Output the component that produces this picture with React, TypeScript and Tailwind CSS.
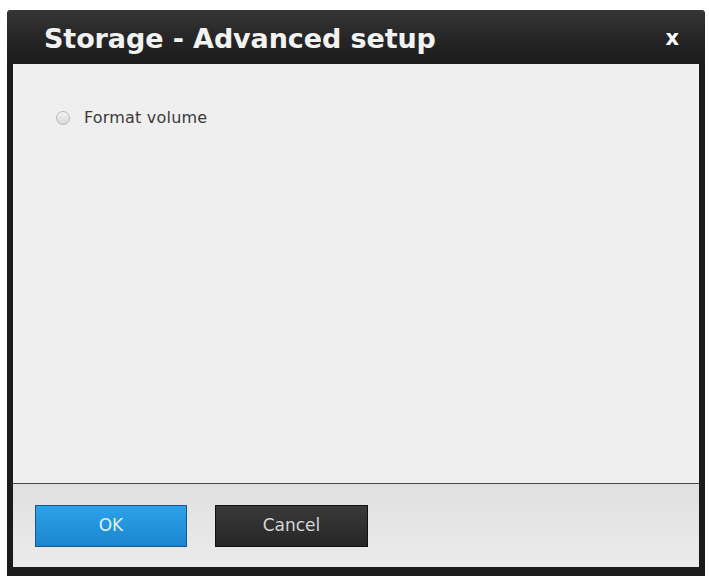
export default function App() {
  return (
    <div className="min-h-screen bg-white pt-[10px] pl-[7px]">
      {/* Dialog frame */}
      <div className="w-[698px] h-[566px] bg-[#1b1b1b] rounded-t-[4px] flex flex-col px-[6px] pb-[9px]">
        {/* Title bar */}
        <div className="h-[54px] -mx-[6px] pl-[37px] pr-[26px] pt-[5px] flex items-center justify-between rounded-t-[4px] bg-gradient-to-b from-[#363636] via-[#262626] to-[#1c1c1c]">
          <span className="text-[27px] font-bold text-[#f2f2f2] font-['DejaVu_Sans',sans-serif] tracking-[-0.1px]">
            Storage - Advanced setup
          </span>
          <button className="text-[21px] font-bold leading-none text-white font-['DejaVu_Sans',sans-serif] pb-[2px]">
            x
          </button>
        </div>

        {/* Body */}
        <div className="flex-1 bg-[#efefef] pl-[43px] pt-[42px]">
          <label className="flex items-center gap-[14px] text-[16px] tracking-[0.2px] text-[#3a3a3a] font-['DejaVu_Sans',sans-serif]">
            <span className="w-[14px] h-[14px] rounded-full border border-[#b9b9b9] bg-gradient-to-b from-[#f4f4f4] to-[#d8d8d8]" />
            Format volume
          </label>
        </div>

        {/* Footer */}
        <div className="h-[84px] border-t border-[#4a4a4a] bg-gradient-to-b from-[#e0e0e0] to-[#ebebeb] flex items-center gap-[28px] pl-[22px]">
          <button className="w-[152px] h-[42px] border border-[#17578a] bg-gradient-to-b from-[#2ca2ea] to-[#1b86cf] text-[#dff0fb] text-[17px] font-['DejaVu_Sans',sans-serif]">
            OK
          </button>
          <button className="w-[153px] h-[42px] border border-[#111] bg-gradient-to-b from-[#3a3a3a] to-[#262626] text-[#d6d6d6] text-[17px] font-['DejaVu_Sans',sans-serif]">
            Cancel
          </button>
        </div>
      </div>
    </div>
  );
}
